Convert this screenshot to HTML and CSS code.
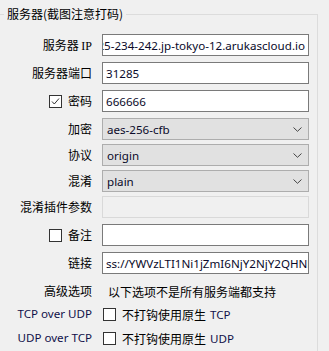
FILE: index.html
```html
<!DOCTYPE html>
<html>
<head>
<meta charset="utf-8">
<link rel="stylesheet" href="styles.css">
</head>
<body>
<fieldset class="group">
  <legend class="title">服务器(截图注意打码)</legend>
  <div class="row r-first">
    <div class="label">服务器&nbsp;<span class="ip">IP</span></div>
    <div class="field text end"><span>seaof-153-125-234-242.jp-tokyo-12.arukascloud.io</span></div>
  </div>
  <div class="row r6">
    <div class="label">服务器端口</div>
    <div class="field text"><span>31285</span></div>
  </div>
  <div class="row r6">
    <div class="label"><span class="check"><svg width="13" height="13" viewBox="0 0 13 13"><rect x="0.5" y="0.5" width="12" height="12" fill="#fff" stroke="#333"/><polyline points="3,6.5 5.3,9 10,3.5" fill="none" stroke="#333" stroke-width="1"/></svg></span>密码</div>
    <div class="field text"><span>666666</span></div>
  </div>
  <div class="row r6">
    <div class="label">加密</div>
    <div class="field combo"><span>aes-256-cfb</span><svg class="chev" width="9" height="5" viewBox="0 0 9 5"><polyline points="0.5,0.5 4.5,4.3 8.5,0.5" fill="none" stroke="#444" stroke-width="1"/></svg></div>
  </div>
  <div class="row r4">
    <div class="label">协议</div>
    <div class="field combo"><span>origin</span><svg class="chev" width="9" height="5" viewBox="0 0 9 5"><polyline points="0.5,0.5 4.5,4.3 8.5,0.5" fill="none" stroke="#444" stroke-width="1"/></svg></div>
  </div>
  <div class="row r4">
    <div class="label">混淆</div>
    <div class="field combo"><span>plain</span><svg class="chev" width="9" height="5" viewBox="0 0 9 5"><polyline points="0.5,0.5 4.5,4.3 8.5,0.5" fill="none" stroke="#444" stroke-width="1"/></svg></div>
  </div>
  <div class="row r4">
    <div class="label">混淆插件参数</div>
    <div class="field disabled"></div>
  </div>
  <div class="row r6">
    <div class="label"><span class="check"><svg width="13" height="13" viewBox="0 0 13 13"><rect x="0.5" y="0.5" width="12" height="12" fill="#fff" stroke="#333"/></svg></span>备注</div>
    <div class="field text"></div>
  </div>
  <div class="row r6">
    <div class="label">链接</div>
    <div class="field text"><span>ss://YWVzLTI1Ni1jZmI6NjY2NjY2QHNlYW9mLTE1My0xMjUtMjM0LTI0Mi5qcC10b2t5by0xMi5hcnVrYXNjbG91ZC5pbzozMTI4NQ</span></div>
  </div>
  <div class="row plain r-adv">
    <div class="label">高级选项</div>
    <div class="note">以下选项不是所有服务端都支持</div>
  </div>
  <div class="row plain r-opt">
    <div class="label latin">TCP over UDP</div>
    <div class="opt"><span class="check"><svg width="13" height="13" viewBox="0 0 13 13"><rect x="0.5" y="0.5" width="12" height="12" fill="#fff" stroke="#333"/></svg></span>不打钩使用原生 <span class="latin">TCP</span></div>
  </div>
  <div class="row plain r-opt2">
    <div class="label latin">UDP over TCP</div>
    <div class="opt"><span class="check"><svg width="13" height="13" viewBox="0 0 13 13"><rect x="0.5" y="0.5" width="12" height="12" fill="#fff" stroke="#333"/></svg></span>不打钩使用原生 <span class="latin">UDP</span></div>
  </div>
</fieldset>
</body>
</html>
```

FILE: styles.css
```css
html, body {
  margin: 0;
  padding: 0;
  background: #f0f0f0;
  width: 329px;
  height: 351px;
  overflow: hidden;
}
body {
  font-family: "Noto Sans", "Noto Sans CJK SC", sans-serif;
  font-size: 12px;
  color: #000;
  padding-top: 6px;
  box-sizing: border-box;
}
.group {
  margin: 0;
  padding: 0 0 20px 0;
  width: 318px;
  box-sizing: border-box;
  border: 1px solid #dcdcdc;
  border-left: none;
  border-bottom: none;
  min-width: 0;
}
.title {
  margin-left: 4px;
  padding: 0 3px;
  line-height: 16px;
  font-family: "Noto Sans CJK SC", sans-serif;
}
.row {
  display: flex;
  align-items: center;
  height: 22px;
}
.r-first { margin-top: 12px; }
.r6 { margin-top: 6px; }
.r4 { margin-top: 4px; }
.plain { height: 20px; }
.r-adv { margin-top: 7px; }
.r-opt { margin-top: 3px; }
.r-opt2 { margin-top: 4px; }
.label {
  width: 92px;
  flex: none;
  text-align: right;
  font-family: "Noto Sans CJK SC", sans-serif;
  white-space: nowrap;
  line-height: 16px;
}
.label.latin, .latin {
  font-family: "Noto Sans", sans-serif;
  font-size: 11.6px;
  color: #10104a;
}
.ip {
  font-family: "Liberation Serif", serif;
  font-size: 12px;
}
.check {
  display: inline-block;
  vertical-align: -2px;
  margin-right: 6px;
  line-height: 0;
}
.field {
  margin-left: 10px;
  width: 207px;
  height: 22px;
  box-sizing: border-box;
  display: flex;
  align-items: center;
  overflow: hidden;
  white-space: nowrap;
  padding: 0 3px;
  font-size: 11.6px;
  color: #0a0a2a;
}
.field span {
  flex: none;
}
.text {
  background: #fff;
  border: 1px solid #7a7a7a;
}
.text.end {
  justify-content: flex-end;
}
.combo {
  background: #e1e1e1;
  border: 1px solid #adadad;
  padding: 0 6px 0 4px;
}
.combo span {
  flex: 1;
}
.chev {
  flex: none;
}
.disabled {
  background: #f0f0f0;
  border: 1px solid #d9d9d9;
}
.note {
  margin-left: 16px;
  font-family: "Noto Sans CJK SC", sans-serif;
  white-space: nowrap;
}
.opt {
  margin-left: 11px;
  display: flex;
  align-items: center;
  font-family: "Noto Sans CJK SC", sans-serif;
  white-space: nowrap;
}
.opt .check {
  vertical-align: 0;
}
.opt .latin {
  margin-left: 4px;
}
```
